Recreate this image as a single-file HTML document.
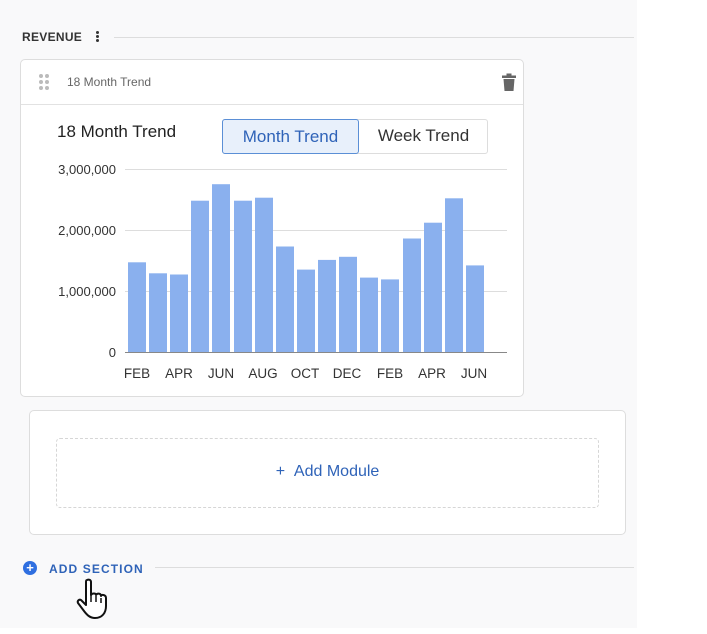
<!DOCTYPE html>
<html><head><style>
*{margin:0;padding:0;box-sizing:border-box}
body{width:707px;height:634px;background:#fff;font-family:"Liberation Sans",sans-serif;position:relative;overflow:hidden}
.bg{position:absolute;left:0;top:0;width:637px;height:628px;background:#f9f9fa}
.abs{position:absolute}
</style></head><body>
<div class="bg"></div>
<div class="abs" style="left:22px;top:30px;font-size:12px;font-weight:bold;color:#333;letter-spacing:0.3px">REVENUE</div>
<div class="abs" style="left:96px;top:31px;width:3px;height:3px;background:#333;border-radius:50%;box-shadow:0 4px 0 #333,0 8px 0 #333"></div>
<div class="abs" style="left:114px;top:37px;width:520px;height:1px;background:#ddd"></div>

<div class="abs" style="left:20px;top:59px;width:504px;height:338px;background:#fff;border:1px solid #ddd;border-radius:5px"></div>
<div class="abs" style="left:21px;top:104px;width:502px;height:1px;background:#e2e2e2"></div>
<svg class="abs" style="left:38px;top:73px" width="12" height="18"><g fill="#bbb"><circle cx="3" cy="3" r="2"/><circle cx="9" cy="3" r="2"/><circle cx="3" cy="9" r="2"/><circle cx="9" cy="9" r="2"/><circle cx="3" cy="15" r="2"/><circle cx="9" cy="15" r="2"/></g></svg>
<div class="abs" style="left:67px;top:75px;font-size:12px;color:#666">18 Month Trend</div>
<svg class="abs" style="left:502px;top:73px" width="14" height="18"><rect x="0" y="2.5" width="14" height="2.5" fill="#666"/><rect x="4.5" y="0.5" width="5" height="3" fill="#666"/><path d="M1.5 6h11l-1 12h-9z" fill="#666"/></svg>

<div class="abs" style="left:57px;top:122px;font-size:17px;color:#222">18 Month Trend</div>
<div class="abs" style="left:222px;top:119px;width:266px;height:35px;border:1px solid #ddd;border-radius:3px;background:#fff"></div>
<div class="abs" style="left:222px;top:119px;width:137px;height:35px;border:1px solid #5b8fd6;border-radius:3px;background:#e8f0fb;color:#2f63b8;font-size:17px;text-align:center;line-height:33px">Month Trend</div>
<div class="abs" style="left:359px;top:119px;width:129px;height:35px;color:#333;font-size:17px;text-align:center;line-height:33px">Week Trend</div>

<svg class="abs" style="left:0;top:0" width="707" height="634" font-family="Liberation Sans" font-size="13" fill="#333">
<g stroke="#ddd" stroke-width="1"><line x1="125" y1="169.5" x2="507" y2="169.5"/><line x1="125" y1="230.5" x2="507" y2="230.5"/><line x1="125" y1="291.5" x2="507" y2="291.5"/></g>
<g text-anchor="end"><text x="116" y="174">3,000,000</text><text x="116" y="235">2,000,000</text><text x="116" y="296">1,000,000</text><text x="116" y="357">0</text></g>
<g fill="#8ab0ee">
<rect x="128" y="262.3" width="18" height="89.7"/>
<rect x="149" y="273.3" width="18" height="78.7"/>
<rect x="170" y="274.5" width="18" height="77.5"/>
<rect x="191" y="200.7" width="18" height="151.3"/>
<rect x="212" y="184.2" width="18" height="167.8"/>
<rect x="234" y="200.7" width="18" height="151.3"/>
<rect x="255" y="197.7" width="18" height="154.3"/>
<rect x="276" y="246.5" width="18" height="105.5"/>
<rect x="297" y="269.6" width="18" height="82.4"/>
<rect x="318" y="259.9" width="18" height="92.1"/>
<rect x="339" y="256.8" width="18" height="95.2"/>
<rect x="360" y="277.6" width="18" height="74.4"/>
<rect x="381" y="279.4" width="18" height="72.6"/>
<rect x="403" y="238.5" width="18" height="113.5"/>
<rect x="424" y="222.7" width="18" height="129.3"/>
<rect x="445" y="198.3" width="18" height="153.7"/>
<rect x="466" y="265.4" width="18" height="86.6"/>
</g>
<line x1="125" y1="352.5" x2="507" y2="352.5" stroke="#888"/>
<g text-anchor="middle" font-size="13.5"><text x="137" y="378">FEB</text><text x="179" y="378">APR</text><text x="221" y="378">JUN</text><text x="263" y="378">AUG</text><text x="305" y="378">OCT</text><text x="347" y="378">DEC</text><text x="390" y="378">FEB</text><text x="432" y="378">APR</text><text x="474" y="378">JUN</text></g>
</svg>

<div class="abs" style="left:29px;top:410px;width:597px;height:125px;background:#fff;border:1px solid #ddd;border-radius:5px"></div>
<div class="abs" style="left:56px;top:438px;width:543px;height:70px;border:1px dashed #d6d6d6;border-radius:4px;text-align:center;line-height:66px;color:#2f63b8;font-size:16px">+&nbsp;&nbsp;Add Module</div>

<div class="abs" style="left:23px;top:561px;width:14px;height:14px;border-radius:50%;background:#2f6fe0;color:#fff;font-size:13px;font-weight:bold;line-height:14px;text-align:center">+</div>
<div class="abs" style="left:49px;top:562px;font-size:12px;font-weight:bold;color:#2f63b8;letter-spacing:1.1px">ADD SECTION</div>
<div class="abs" style="left:155px;top:567px;width:479px;height:1px;background:#ddd"></div>
<svg class="abs" style="left:70px;top:577px" width="40" height="45"><path d="M17 3c2-1 4 0 4 2v13c1-2 5-2 5 0c1-2 5-2 5 1c1-2 5-1 5 2v8c0 7-4 12-11 12c-5 0-8-3-11-7l-6-8c-1-2 1-4 3-3l5 5V5c0-1 0-2 1-2z" fill="#fff" stroke="#111" stroke-width="2" stroke-linejoin="round"/><path d="M21 18v7M26 19v6M31 21v5" stroke="#111" stroke-width="1.5"/></svg>
</body></html>
